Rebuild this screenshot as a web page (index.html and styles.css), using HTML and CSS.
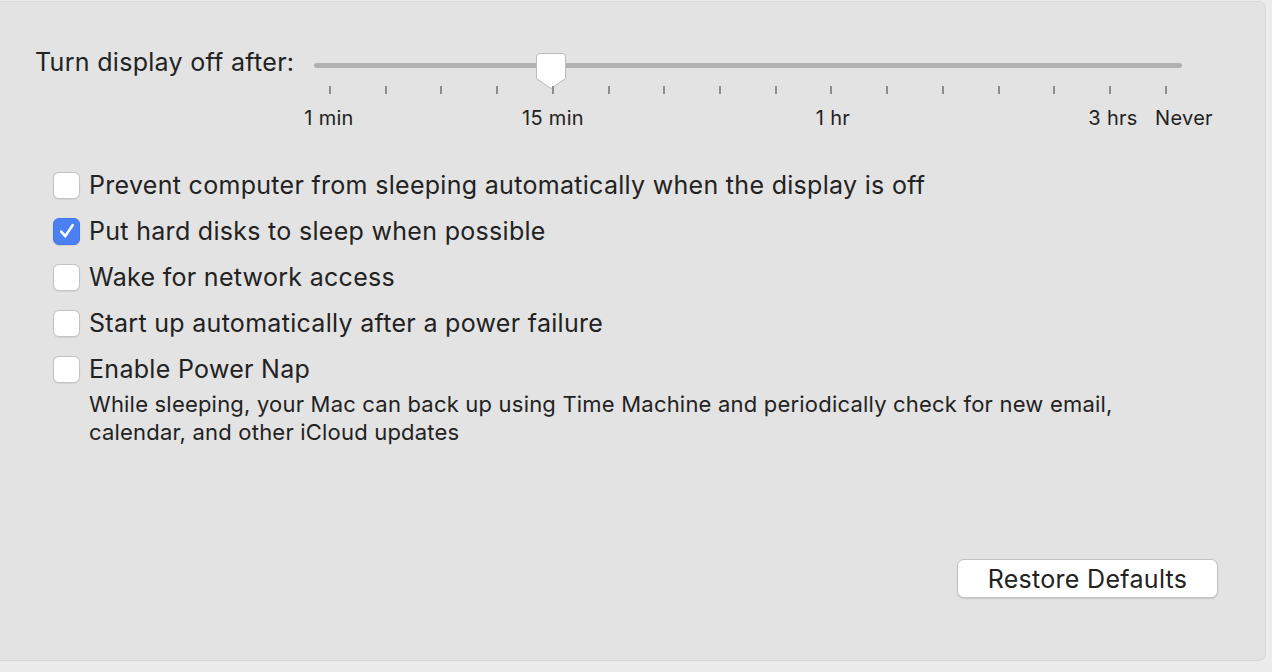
FILE: index.html
```html
<!DOCTYPE html>
<html>
<head>
<meta charset="utf-8">
<link rel="stylesheet" href="styles.css">
</head>
<body>
<div class="panel">
  <div class="display-row">
    <div class="display-label">Turn display off after:</div>
    <div class="slider">
      <div class="track"></div>
      <svg class="thumb" width="32" height="40" viewBox="0 0 32 40">
        <path d="M5 1.5 H27 Q30.5 1.5 30.5 5 V26.5 L16 36.5 L1.5 26.5 V5 Q1.5 1.5 5 1.5 Z" fill="#ffffff" stroke="#bcbcbc" stroke-width="1"/>
      </svg>
      <div class="ticks">
        <span></span><span></span><span></span><span></span><span></span><span></span><span></span><span></span>
        <span></span><span></span><span></span><span></span><span></span><span></span><span></span><span></span>
      </div>
      <div class="labels">
        <span class="lbl" style="left:15px">1 min</span>
        <span class="lbl" style="left:239px">15 min</span>
        <span class="lbl" style="left:519px">1 hr</span>
        <span class="lbl" style="left:799px">3 hrs</span>
        <span class="lbl" style="left:870px">Never</span>
      </div>
    </div>
  </div>

  <div class="options">
    <label class="opt"><span class="box"></span><span>Prevent computer from sleeping automatically when the display is off</span></label>
    <label class="opt"><span class="box checked"><svg width="20" height="20" viewBox="0 0 20 20"><path d="M4.2 10.6 L8.2 15.2 L15.6 4.2" fill="none" stroke="#fff" stroke-width="2.6" stroke-linecap="round" stroke-linejoin="round"/></svg></span><span>Put hard disks to sleep when possible</span></label>
    <label class="opt"><span class="box"></span><span>Wake for network access</span></label>
    <label class="opt"><span class="box"></span><span>Start up automatically after a power failure</span></label>
    <label class="opt"><span class="box"></span><span>Enable Power Nap</span></label>
    <p class="desc">While sleeping, your Mac can back up using Time Machine and periodically check for new email, calendar, and other iCloud updates</p>
  </div>

  <div class="footer">
    <button class="btn">Restore Defaults</button>
  </div>
</div>
</body>
</html>
```

FILE: styles.css
```css
html, body {
  margin: 0;
  padding: 0;
  background: #ececec;
  width: 1272px;
  height: 672px;
  overflow: hidden;
  font-family: Inter, "Liberation Sans", sans-serif;
  color: #222222;
}

.panel {
  box-sizing: border-box;
  margin: 1px 6px 0 0;
  height: 660px;
  background: #e3e3e3;
  border: 1px solid #d8d8d8;
  border-left: none;
  border-radius: 0 7px 7px 0;
  position: relative;
}

.display-row {
  display: flex;
  align-items: flex-start;
  padding: 44px 0 0 35px;
}

.display-label {
  font-size: 25px;
  line-height: 32px;
  width: 279px;
  letter-spacing: 0.3px;
  white-space: nowrap;
}

.slider {
  position: relative;
  width: 868px;
  height: 90px;
}

.track {
  position: absolute;
  left: 0;
  right: 0;
  top: 17px;
  height: 5px;
  border-radius: 3px;
  background: #b1b1b1;
}

.thumb {
  position: absolute;
  left: 221px;
  top: 6px;
  filter: drop-shadow(0 0.5px 0.5px rgba(0,0,0,0.15));
}

.ticks {
  position: absolute;
  left: 15px;
  top: 40px;
  width: 838px;
  display: flex;
  justify-content: space-between;
}

.ticks span {
  width: 2px;
  height: 8px;
  background: #8e8e8e;
}

.labels {
  position: absolute;
  left: 0;
  top: 59px;
  width: 100%;
}

.lbl {
  position: absolute;
  transform: translateX(-50%);
  font-size: 20px;
  line-height: 26px;
  letter-spacing: 0.3px;
  white-space: nowrap;
}

.options {
  display: flex;
  flex-direction: column;
  padding: 26px 0 0 53px;
}

.opt {
  display: flex;
  align-items: center;
  gap: 9px;
  height: 46px;
  font-size: 25px;
  letter-spacing: 0.3px;
}

.box {
  box-sizing: border-box;
  width: 27px;
  height: 27px;
  border-radius: 6px;
  background: #ffffff;
  border: 1px solid #c4c4c4;
  box-shadow: 0 0.5px 1px rgba(0,0,0,0.08);
  display: flex;
  align-items: center;
  justify-content: center;
  flex: none;
}

.box.checked {
  background: #4b80f2;
  border-color: #4078ee;
}

.desc {
  margin: -2px 0 0 36px;
  width: 1040px;
  font-size: 22px;
  line-height: 28px;
  letter-spacing: 0.2px;
}

.footer {
  display: flex;
  justify-content: flex-end;
  padding: 113px 47px 0 0;
}

.btn {
  width: 261px;
  height: 39px;
  background: #ffffff;
  border: 1px solid #c2c2c2;
  border-radius: 7px;
  box-shadow: 0 1px 1.5px rgba(0,0,0,0.12);
  font-family: Inter, "Liberation Sans", sans-serif;
  font-size: 25px;
  letter-spacing: 0.3px;
  color: #222222;
  padding: 0;
}
```
